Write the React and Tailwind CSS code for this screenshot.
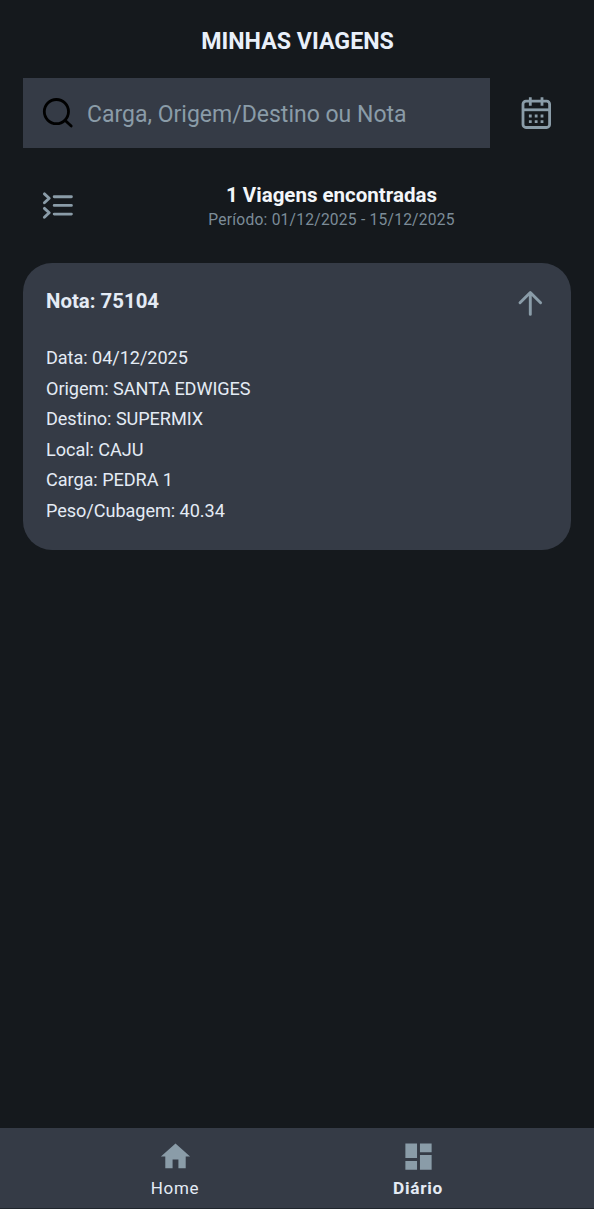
import React, { useState } from "react";
import { MdDashboard, MdHome } from "react-icons/md";

const viagens = [
  {
    nota: "75104",
    campos: [
      ["Data", "04/12/2025"],
      ["Origem", "SANTA EDWIGES"],
      ["Destino", "SUPERMIX"],
      ["Local", "CAJU"],
      ["Carga", "PEDRA 1"],
      ["Peso/Cubagem", "40.34"],
    ],
  },
];

const SearchIcon = () => (
  <svg className="h-8 w-8 shrink-0" viewBox="0 0 32 32" fill="none" stroke="#000" strokeWidth={2.8}>
    <circle cx="14.4" cy="14.6" r="12.1" />
    <path strokeLinecap="round" d="M23 23.2l6.2 5.9" />
  </svg>
);

const CalendarIcon = () => (
  <svg className="h-8 w-8" viewBox="0 0 32 32" fill="none" stroke="#8a9ca8" strokeWidth={2.8}>
    <rect x="3" y="4.1" width="26.6" height="26.4" rx="3" />
    <path d="M3 12.8h26.6" />
    <path strokeWidth={2.8} d="M10.3 0.2v8.6M22 0.2v8.6" />
    <path strokeDasharray="2.8 3.05" d="M8.9 19h14.6M8.9 24.7h14.6" />
  </svg>
);

const ListIcon = () => (
  <svg className="h-8 w-8" viewBox="0 0 32 32" fill="none" stroke="#8a9ca8" strokeWidth={2.9} strokeLinecap="round">
    <path d="M2.4 3.9l4.8 4.4-4.8 4.4M2.4 18.4l4.8 4.4-4.8 4.4" strokeLinejoin="round" />
    <path d="M12.2 6.8h17.2M12.2 15.4h17.2M12.2 24.1h17.2" />
  </svg>
);

const ArrowIcon = ({ open }) => (
  <svg
    className={`h-8 w-8 ${open ? "" : "rotate-180"}`}
    viewBox="0 0 32 32"
    fill="none"
    stroke="#8a9ca8"
    strokeWidth={2.9}
    strokeLinecap="round"
    strokeLinejoin="round"
  >
    <path d="M16.3 27.4V5.8M6 15.8L16.3 5.5l10.3 10.3" />
  </svg>
);

const ViagemCard = ({ viagem }) => {
  const [open, setOpen] = useState(true);

  return (
    <div className="mx-[23px] rounded-[29px] bg-[#353b46] px-[23px] py-6 text-[#e4ebf5]">
      <button onClick={() => setOpen((prev) => !prev)} className="flex w-full items-center justify-between">
        <span className="pb-1 text-[20.4px] leading-7 font-bold">Nota: {viagem.nota}</span>
        <span className="mr-[2px]">
          <ArrowIcon open={open} />
        </span>
      </button>

      {open && (
        <ul className="mt-6 text-[18.1px] leading-[30.5px] tracking-[-0.05px]">
          {viagem.campos.map(([label, value]) => (
            <li key={label}>
              {label}: {value}
            </li>
          ))}
        </ul>
      )}
    </div>
  );
};

const App = () => {
  const [busca, setBusca] = useState("");

  return (
    <div className="flex h-[1209px] w-full flex-col bg-[#15191d] font-[Roboto,sans-serif]">
      <h1 className="pt-[25px] pl-px text-center text-[23.2px] leading-8 font-bold text-[#e9f0fa]">MINHAS VIAGENS</h1>

      <div className="mt-[21px] flex items-center pl-[23px]">
        <div className="flex h-[70px] w-[467px] items-center gap-[13px] bg-[#353b46] pl-[19px]">
          <SearchIcon />
          <input
            value={busca}
            onChange={(e) => setBusca(e.target.value)}
            placeholder="Carga, Origem/Destino ou Nota"
            className="w-full bg-transparent pt-[3px] text-[23px] leading-8 text-[#8a9ca8] outline-none placeholder:text-[#8a9ca8]"
          />
        </div>
        <button className="ml-[30px]">
          <CalendarIcon />
        </button>
      </div>

      <div className="mt-[35px] flex h-[46px] items-center pl-[42px]">
        <button>
          <ListIcon />
        </button>
        <div className="flex-1 pt-[3px] pr-[26px] pl-[21px] text-center">
          <p className="text-[20.5px] leading-6 font-bold text-[#f3f6f9]">1 Viagens encontradas</p>
          <p className="pt-px text-[15.6px] leading-[25px] tracking-[0.22px] text-[#7c8c98]">
            Período: 01/12/2025 - 15/12/2025
          </p>
        </div>
      </div>

      <main className="mt-[34px] flex-1">
        {viagens.map((viagem) => (
          <ViagemCard key={viagem.nota} viagem={viagem} />
        ))}
      </main>

      <nav className="flex h-[81px] justify-center border-b border-[#20262d] bg-[#353b46] pt-[11px] text-[17px] leading-6 tracking-[0.7px] text-[#e4ebf5]">
        <button className="-ml-px flex w-[243px] flex-col items-center">
          <MdHome className="h-[35px] w-[35px] text-[#8a9ca8]" />
          <span className="mt-[2px]">Home</span>
        </button>
        <button className="flex w-[243px] flex-col items-center font-bold">
          <MdDashboard className="h-[35px] w-[35px] text-[#8a9ca8]" />
          <span className="mt-[2px] text-[17.3px]">Diário</span>
        </button>
      </nav>
    </div>
  );
};

export default App;
